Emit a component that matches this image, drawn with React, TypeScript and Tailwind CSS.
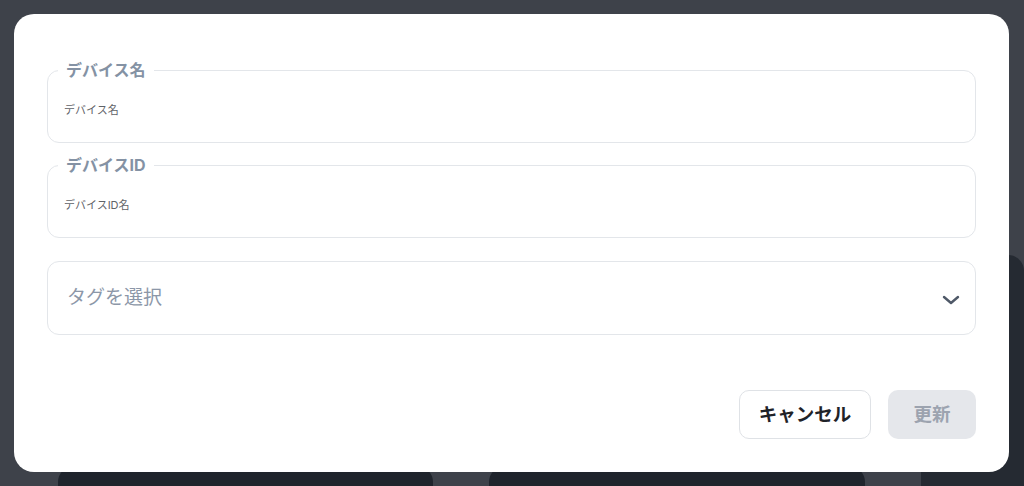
import { ReactNode } from "react";

const font = { fontFamily: 'Inter, "Noto Sans CJK JP", sans-serif' };

function Field({ label, value }: { label: string; value: string }) {
  return (
    <fieldset className="rounded-xl border border-[#e3e6ea] pl-[10px] pr-4 pt-[22px] pb-[24px]">
      <legend className="px-2 text-[16px] font-bold leading-[20px] text-[#8492a4]">
        {label}
      </legend>
      <div className="pl-[6px] text-[11px] leading-[16px] text-[#5f6368]">{value}</div>
    </fieldset>
  );
}

function Button({ children, primary }: { children: ReactNode; primary?: boolean }) {
  return (
    <button
      className={
        primary
          ? "h-[49px] w-[88px] rounded-[10px] bg-[#e5e7eb] text-[18.5px] font-bold text-[#9ca3af]"
          : "h-[49px] w-[132px] rounded-[10px] border border-[#dfe2e6] bg-white text-[18.5px] font-bold text-[#1f2328]"
      }
    >
      {children}
    </button>
  );
}

export default function App() {
  return (
    <div className="relative h-[486px] w-full overflow-hidden bg-[#3e424a]" style={font}>
      {/* page content behind the overlay */}
      <div className="grid h-full grid-cols-[375px_376px_1fr] gap-x-[56px] pl-[58px]">
        <div className="mt-[466px] rounded-t-2xl bg-[#1f242c]" />
        <div className="mt-[466px] rounded-t-2xl bg-[#1f242c]" />
        <div className="mt-[255px] rounded-t-2xl bg-[#252a32]" />
      </div>

      {/* modal */}
      <div className="absolute top-[14px] left-[14px] right-[15px] bottom-[14px] flex flex-col rounded-[20px] bg-white px-[33px] pt-[46px]">
        <Field label="デバイス名" value="デバイス名" />
        <div className="mt-[12px]">
          <Field label="デバイスID" value="デバイスID名" />
        </div>

        <div className="mt-[23px] flex h-[74px] items-center justify-between rounded-xl border border-[#e3e6ea] pl-[19px] pr-[15px]">
          <span className="text-[19px] text-[#8c97a8]">タグを選択</span>
          <svg width="18" height="10" viewBox="0 0 18 10" fill="none" className="mt-[3px]">
            <polyline
              points="2,2 9,8 16,2"
              stroke="#4f5968"
              strokeWidth="2.4"
              strokeLinecap="round"
              strokeLinejoin="round"
            />
          </svg>
        </div>

        <div className="mt-[55px] flex justify-end gap-[17px]">
          <Button>キャンセル</Button>
          <Button primary>更新</Button>
        </div>
      </div>
    </div>
  );
}
